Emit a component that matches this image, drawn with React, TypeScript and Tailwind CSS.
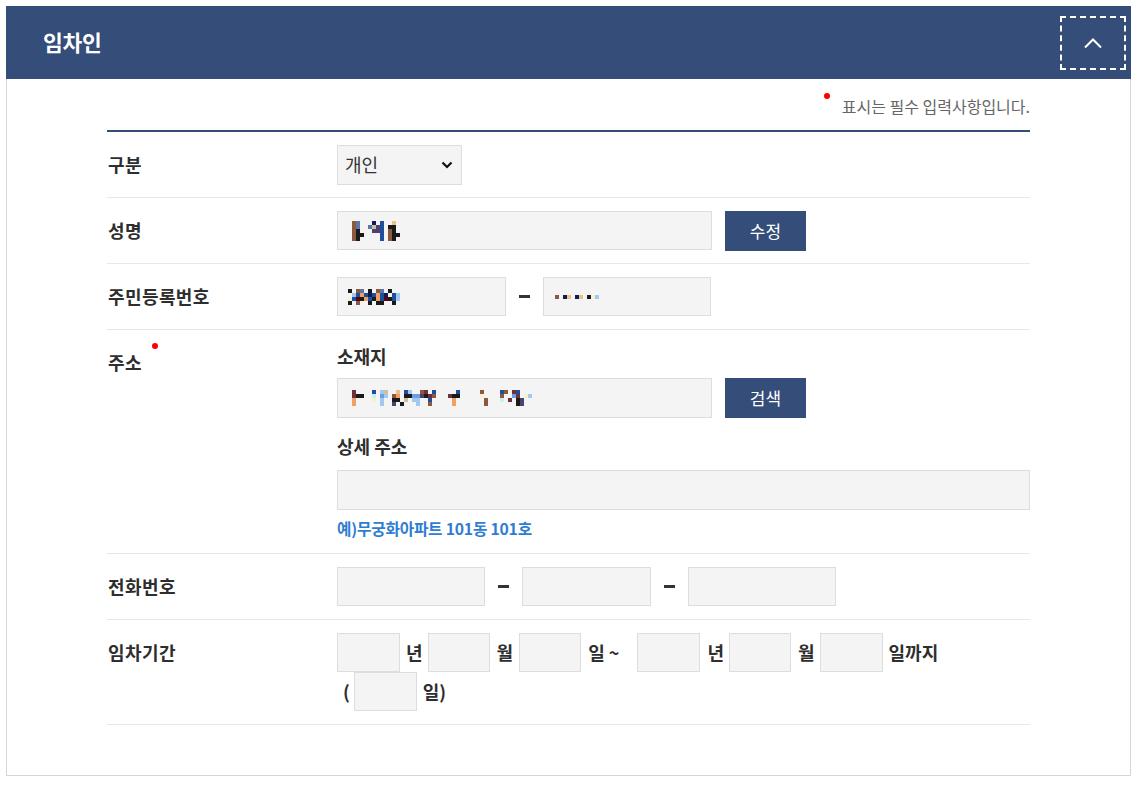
import React from "react";

const PALETTE: Record<string, string> = {
  a: "bg-[#8b5a3c]",
  b: "bg-[#5b76a8]",
  n: "bg-[#0d1a5c]",
  B: "bg-[#1f4f9c]",
  t: "bg-[#f0c080]",
  k: "bg-[#1a1a1a]",
  g: "bg-[#c8c0a0]",
  p: "bg-[#504070]",
  o: "bg-[#f0a060]",
  l: "bg-[#a0c8f0]",
  r: "bg-[#600010]",
  c: "bg-[#c8f0f4]",
  y: "bg-[#f5f0d0]",
  m: "bg-[#70303a]",
  w: "bg-[#6aa0e0]",
};

function Mosaic({ rows }: { rows: string[] }) {
  return (
    <div className="flex flex-col">
      {rows.map((r, i) => (
        <div key={i} className="flex">
          {r.split("").map((ch, j) => (
            <span key={j} className={`block w-[4px] h-[4px] ${PALETTE[ch] ?? "bg-transparent"}`} />
          ))}
        </div>
      ))}
    </div>
  );
}

const inputCls = "h-[39px] bg-[#f4f4f4] border border-[#dddddd] outline-none";

function Dash() {
  return <span className="block w-[11px] h-[3px] bg-[#333333] mx-[13px]" />;
}

function Row({ label, children, start = false, h = "" }: { label: React.ReactNode; children: React.ReactNode; start?: boolean; h?: string }) {
  return (
    <div className={`flex border-b border-[#e8e8e8] ${start ? "items-start" : "items-center"} ${h}`}>
      <div className="w-[230px] shrink-0 pl-[1px] text-[18px] font-bold text-[#2e2e2e] tracking-[0.4px]">{label}</div>
      <div className="flex-1">{children}</div>
    </div>
  );
}

export default function App() {
  const font = { fontFamily: '"Noto Sans CJK KR", "Noto Sans", sans-serif' };
  return (
    <div className="bg-white min-h-[786px] p-[6px]" style={font}>
      <section className="w-[1125px]">
        <header className="h-[73px] bg-[#344d79] flex items-center justify-between pl-[37px] pr-[5px]">
          <h2 className="text-white text-[21.5px] font-bold tracking-[-0.3px]">임차인</h2>
          <button className="w-[66px] h-[54px] border-2 border-dashed border-white flex items-center justify-center">
            <svg width="20" height="12" viewBox="0 0 20 12" fill="none">
              <path d="M2 10.5 L10 2.5 L18 10.5" stroke="white" strokeWidth="2" />
            </svg>
          </button>
        </header>
        <div className="border border-t-0 border-[#d6d6d6] px-[100px] pb-[50px]">
          <div className="flex justify-end items-start pt-[13px] pb-[14px] h-[51px]">
            <span className="block w-[6px] h-[6px] rounded-full bg-[#ff0000] mt-[1px] mr-[12px]" />
            <span className="text-[16px] text-[#666666] leading-[24px] mt-[2px]">표시는 필수 입력사항입니다.</span>
          </div>
          <div className="border-t-2 border-[#344d79]">
            <Row label="구분" h="h-[66px]">
              <div className="relative w-[125px] h-[40px]">
                <select className="appearance-none w-full h-full bg-[#f4f4f4] border border-[#dddddd] pl-[7px] text-[18px] text-[#333333] outline-none">
                  <option>개인</option>
                </select>
                <svg className="absolute right-[9px] top-[16px] pointer-events-none" width="12" height="8" viewBox="0 0 12 8" fill="none">
                  <path d="M1.5 1.5 L6 6 L10.5 1.5" stroke="#111" strokeWidth="2.2" />
                </svg>
              </div>
            </Row>
            <Row label="성명" h="h-[66px]">
              <div className="flex items-center">
                <div className={`${inputCls} w-[375px] flex items-center pl-[14px]`}>
                  <Mosaic rows={["ab...n.B..t.", "ab..bgpB.kk.", "ak...ppB.ak.", "akk....B.akk", "ak.....B.ak."]} />
                </div>
                <button className="ml-[13px] w-[81px] h-[40px] bg-[#344d79] text-white text-[17px]">수정</button>
              </div>
            </Row>
            <Row label="주민등록번호" h="h-[66px]">
              <div className="flex items-center">
                <div className={`${inputCls} w-[169px] flex items-center pl-[10px]`}>
                  <Mosaic rows={["k.ab.k.ab.k...", ".lBoBnBoBn.Bl.", "yBrkoBkoBrkBl.", "k.a..k.kk..k.."]} />
                </div>
                <Dash />
                <div className={`${inputCls} w-[168px] flex items-center pl-[11px]`}>
                  <Mosaic rows={["a.nt.nt.kyl"]} />
                </div>
              </div>
            </Row>
            <Row
              start
              label={
                <span className="relative inline-block pt-[20px] leading-[24px]">
                  주소
                  <span className="absolute left-full ml-[10px] top-[13px] w-[6px] h-[6px] rounded-full bg-[#ff0000]" />
                </span>
              }
            >
              <div className="pt-[14px] pb-[13px]">
                <div className="h-[24px] leading-[24px] text-[18px] font-bold text-[#2e2e2e]">소재지</div>
                <div className="mt-[10px] flex items-center">
                  <div className={`${inputCls} h-[40px] w-[375px] flex items-center pl-[14px]`}>
                    <Mosaic
                      rows={[
                        "m....B.lg..t.Bl..am.B.....B.....a....Ba.mB...",
                        "mkk..c.wl.ao.kkwwpkma...mkk.....y....a..wm.yl",
                        "o....y.l..kk.g.ll..B.....o.......a...c.m.kp..",
                        "o......l..p.k...l..a.....o.......a.......kp..",
                      ]}
                    />
                  </div>
                  <button className="ml-[13px] w-[81px] h-[40px] bg-[#344d79] text-white text-[17px]">검색</button>
                </div>
                <div className="mt-[16px] h-[24px] leading-[24px] text-[18px] font-bold text-[#2e2e2e]">상세 주소</div>
                <input className={`${inputCls} h-[40px] w-full mt-[12px] block`} />
                <div className="mt-[8px] h-[22px] leading-[22px] text-[15.7px] font-bold text-[#2f7dd1] tracking-[-0.2px]">
                  예)무궁화아파트 101동 101호
                </div>
              </div>
            </Row>
            <Row label="전화번호" h="h-[66px]">
              <div className="flex items-center">
                <input className={`${inputCls} w-[148px]`} />
                <Dash />
                <input className={`${inputCls} w-[129px]`} />
                <Dash />
                <input className={`${inputCls} w-[148px]`} />
              </div>
            </Row>
            <Row start label={<span className="block h-[39px] leading-[39px] mt-[13px]">임차기간</span>}>
              <div className="py-[13px] text-[18px] font-bold text-[#2e2e2e]">
                <div className="flex items-center h-[39px]">
                  <input className={`${inputCls} w-[63px]`} />
                  <span className="ml-[6px] mr-[5px]">년</span>
                  <input className={`${inputCls} w-[62px]`} />
                  <span className="ml-[7px] mr-[6px]">월</span>
                  <input className={`${inputCls} w-[62px]`} />
                  <span className="ml-[7px] mr-[18px]">일 ~</span>
                  <input className={`${inputCls} w-[63px]`} />
                  <span className="ml-[7px] mr-[5px]">년</span>
                  <input className={`${inputCls} w-[62px]`} />
                  <span className="ml-[7px] mr-[5px]">월</span>
                  <input className={`${inputCls} w-[63px]`} />
                  <span className="ml-[6px]">일까지</span>
                </div>
                <div className="flex items-center h-[39px]">
                  <span className="ml-[6px]">(</span>
                  <input className={`${inputCls} w-[63px] ml-[4px]`} />
                  <span className="ml-[6px]">일)</span>
                </div>
              </div>
            </Row>
          </div>
        </div>
      </section>
    </div>
  );
}
